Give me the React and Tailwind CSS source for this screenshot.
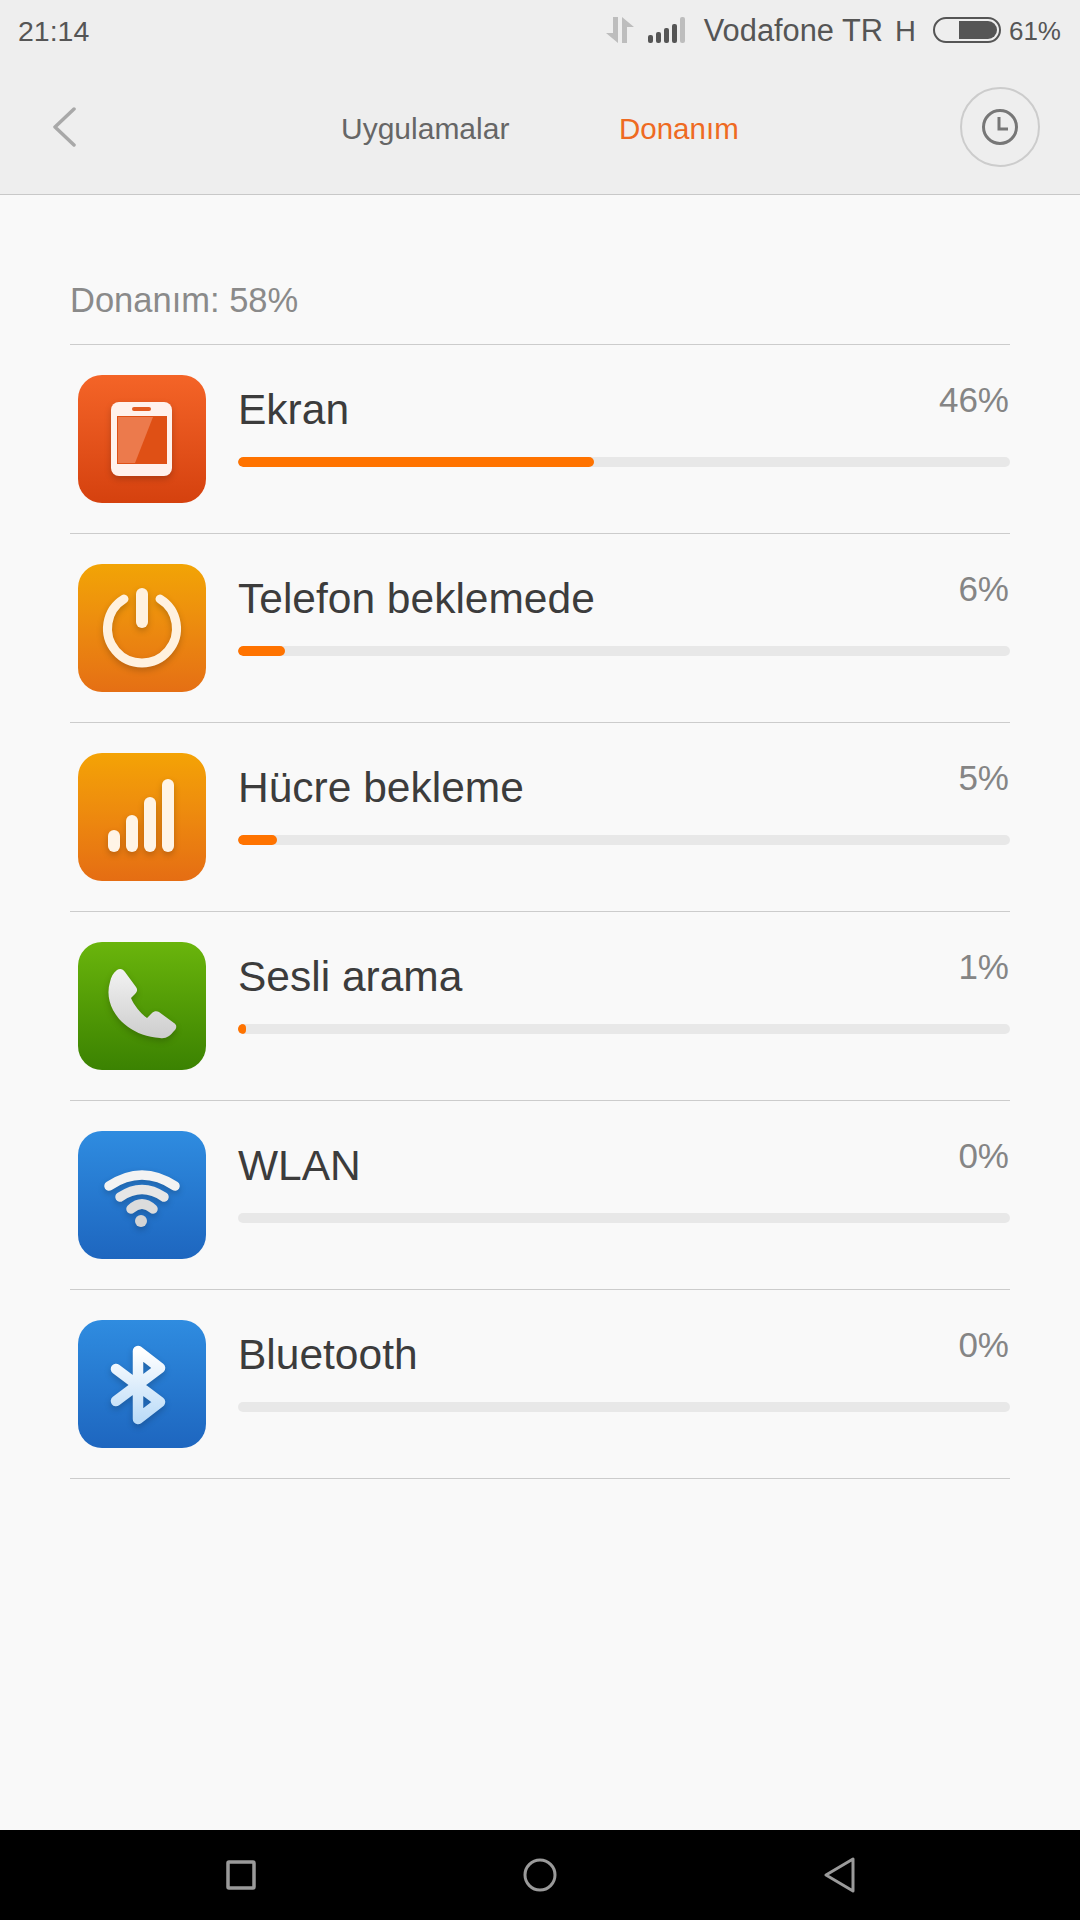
import React from 'react';

function IconBox({ from, to, children }) {
  return (
    <div className={`w-[128px] h-[128px] shrink-0 rounded-[24px] bg-gradient-to-b ${from} ${to}`}>
      <svg width="128" height="128" viewBox="0 0 128 128" className="block drop-shadow-[0_3px_3px_rgba(0,0,0,0.2)]">
        {children}
      </svg>
    </div>
  );
}

function ScreenIcon() {
  return (
    <IconBox from="from-[#f46427]" to="to-[#d5410e]">
      <rect x="33" y="27" width="61" height="74" rx="8" fill="#fff1ec" />
      <rect x="39" y="41" width="50" height="48" fill="#df5015" />
      <polygon points="40,42 75,42 57,88 40,88" fill="#ec7a4c" />
      <rect x="54" y="32" width="19" height="4" rx="2" fill="#e25a20" />
    </IconBox>
  );
}

function PowerIcon() {
  return (
    <IconBox from="from-[#f2a405]" to="to-[#e56f14]">
      <path d="M46 35 A34.5 34.5 0 1 0 82 35" fill="none" stroke="#fff1df" strokeWidth="9" strokeLinecap="round" />
      <line x1="64" y1="30" x2="64" y2="58" stroke="#fff1df" strokeWidth="12" strokeLinecap="round" />
    </IconBox>
  );
}

function SignalIcon() {
  return (
    <IconBox from="from-[#f4a305]" to="to-[#e56d13]">
      <rect x="30" y="77" width="12" height="22" rx="6" fill="#fff4e6" />
      <rect x="48" y="62" width="12" height="37" rx="6" fill="#fff4e6" />
      <rect x="66" y="44" width="12" height="55" rx="6" fill="#fff4e6" />
      <rect x="84" y="26" width="12" height="73" rx="6" fill="#fff4e6" />
    </IconBox>
  );
}

function CallIcon() {
  return (
    <IconBox from="from-[#6ab50c]" to="to-[#3b8202]">
      <defs>
        <linearGradient id="callFill" x1="0" y1="0" x2="0" y2="1">
          <stop offset="0" stopColor="#f2f2f2" />
          <stop offset="1" stopColor="#cdcdcd" />
        </linearGradient>
      </defs>
      <path
        d="M39 28 C42 26 45 27 47 30 L58 45 C60 48 59 50 57 52 L53 56 C56 63 62 71 69 76 L74 71 C76 69 79 69 81 70 L96 81 C99 83 99 86 96 89 C92 94 88 97 82 96 C48 94 24 66 32 40 C33 35 35 31 39 28 Z"
        fill="url(#callFill)"
      />
    </IconBox>
  );
}

function WifiIcon() {
  return (
    <IconBox from="from-[#2f8ce0]" to="to-[#1e66bf]">
      <path d="M31 55 Q64 33 97 55" fill="none" stroke="#f3f3f3" strokeWidth="9.5" strokeLinecap="round" />
      <path d="M42 66 Q64 51 86 66" fill="none" stroke="#e6e6e6" strokeWidth="9.5" strokeLinecap="round" />
      <path d="M53 78 Q64 68 75 78" fill="none" stroke="#dcdcdc" strokeWidth="9.5" strokeLinecap="round" />
      <circle cx="63" cy="90" r="6" fill="#d4d4d4" />
    </IconBox>
  );
}

function BluetoothIcon() {
  return (
    <IconBox from="from-[#2f8ce0]" to="to-[#1e66bf]">
      <defs>
        <linearGradient id="btFill" x1="0" y1="0" x2="0" y2="1">
          <stop offset="0" stopColor="#ffffff" />
          <stop offset="1" stopColor="#bcdcf8" />
        </linearGradient>
      </defs>
      <path
        d="M38 49 L82 82 L60 99 L60 31 L82 48 L38 81"
        fill="none"
        stroke="url(#btFill)"
        strokeWidth="10.5"
        strokeLinecap="round"
        strokeLinejoin="round"
      />
    </IconBox>
  );
}

const rows = [
  { name: 'Ekran', pct: '46%', fill: 'w-[356px]', icon: <ScreenIcon /> },
  { name: 'Telefon beklemede', pct: '6%', fill: 'w-[47px]', icon: <PowerIcon /> },
  { name: 'Hücre bekleme', pct: '5%', fill: 'w-[39px]', icon: <SignalIcon /> },
  { name: 'Sesli arama', pct: '1%', fill: 'w-[8px]', icon: <CallIcon /> },
  { name: 'WLAN', pct: '0%', fill: 'w-0', icon: <WifiIcon /> },
  { name: 'Bluetooth', pct: '0%', fill: 'w-0', icon: <BluetoothIcon /> },
];

function StatusBar() {
  return (
    <div className="h-[60px] flex items-center justify-between pl-[18px] pr-[19px] text-[#555555] leading-[34px]">
      <span className="mt-[2px] text-[28.5px]">21:14</span>
      <div className="flex items-center">
        <svg width="28" height="26" viewBox="0 0 28 26" className="block">
          <path d="M12 0 V26 L0 16 H7 V0 Z" fill="#bdbdbd" />
          <path d="M16 26 V0 L28 10 H21 V26 Z" fill="#bdbdbd" />
        </svg>
        <svg width="37" height="26" viewBox="0 0 37 26" className="block ml-[14px]">
          <rect x="0" y="18" width="5" height="8" rx="2" fill="#555555" />
          <rect x="8" y="15" width="5" height="11" rx="2" fill="#555555" />
          <rect x="16" y="11" width="5" height="15" rx="2" fill="#555555" />
          <rect x="24" y="7" width="5" height="19" rx="2" fill="#555555" />
          <rect x="32" y="0" width="5" height="26" rx="2" fill="#bdbdbd" />
        </svg>
        <span className="mt-[2px] ml-[19px] text-[30.8px]">Vodafone TR</span>
        <span className="mt-[2px] ml-[12px] text-[29px]">H</span>
        <div className="ml-[17px] w-[68px] h-[26px] rounded-[13px] border-2 border-[#555555] flex justify-end p-[2px]">
          <div className="w-[38px] h-full bg-[#555555] rounded-r-[9px]" />
        </div>
        <span className="mt-[2px] ml-[8px] text-[26px]">61%</span>
      </div>
    </div>
  );
}

function Header() {
  return (
    <div className="bg-[#eeeeee] border-b border-[#c8c8c8] h-[195px]">
      <StatusBar />
      <div className="flex items-center h-[134px] pb-[1px]">
        <svg width="24" height="40" viewBox="0 0 24 40" className="block ml-[52px]">
          <path d="M22 2 L3 20 L22 38" fill="none" stroke="#a8a8a8" strokeWidth="3.5" strokeLinecap="round" strokeLinejoin="round" />
        </svg>
        <span className="mt-[4px] ml-[265px] w-[278px] text-[30px] leading-[36px] text-[#666666]">Uygulamalar</span>
        <span className="mt-[4px] w-[341px] text-[29.5px] leading-[36px] text-[#ee6a22]">Donanım</span>
        <div className="w-[80px] h-[80px] rounded-full border-2 border-[#cccccc] flex items-center justify-center">
          <svg width="38" height="38" viewBox="0 0 38 38" className="block">
            <circle cx="19" cy="19" r="16.5" fill="none" stroke="#777777" strokeWidth="3" />
            <path d="M18 9 V21 H27" fill="none" stroke="#777777" strokeWidth="3" />
          </svg>
        </div>
      </div>
    </div>
  );
}

function Row({ row }) {
  return (
    <div className="h-[189px] border-b border-[#cccccc] flex items-start pl-[8px]">
      <div className="mt-[30px]">{row.icon}</div>
      <div className="ml-[32px] flex-1 pt-[35px]">
        <div className="h-[54px] flex justify-between items-start">
          <span className="mt-[6px] text-[42.5px] leading-[48px] text-[#3c3c3c]">{row.name}</span>
          <span className="mr-[1px] text-[35px] leading-[40px] text-[#858585]">{row.pct}</span>
        </div>
        <div className="mt-[23px] h-[10px] rounded-full bg-[#e8e8e8] overflow-hidden">
          <div className={`h-full rounded-full bg-[#ff7300] ${row.fill}`} />
        </div>
      </div>
    </div>
  );
}

export default function App() {
  return (
    <div className="w-[1080px] h-[1920px] flex flex-col bg-[#f9f9f9] font-['Liberation_Sans',Arial,sans-serif]">
      <Header />
      <div className="flex-1 px-[70px]">
        <div className="h-[150px] border-b border-[#cccccc] flex items-end pb-[25px]">
          <span className="text-[34.5px] leading-[38px] text-[#8a8a8a]">Donanım: 58%</span>
        </div>
        {rows.map((row) => (
          <Row key={row.name} row={row} />
        ))}
      </div>
      <div className="h-[90px] bg-black flex items-center justify-between pl-[226px] pr-[224px]">
        <svg width="30" height="30" viewBox="0 0 30 30" className="block">
          <rect x="2" y="2" width="26" height="26" rx="1" fill="none" stroke="#9a9a9a" strokeWidth="3.5" />
        </svg>
        <svg width="34" height="34" viewBox="0 0 34 34" className="block">
          <circle cx="17" cy="17" r="15" fill="none" stroke="#9a9a9a" strokeWidth="3" />
        </svg>
        <svg width="32" height="36" viewBox="0 0 32 36" className="block">
          <path d="M29 2 V34 L2 18 Z" fill="none" stroke="#9a9a9a" strokeWidth="3" strokeLinejoin="round" />
        </svg>
      </div>
    </div>
  );
}
